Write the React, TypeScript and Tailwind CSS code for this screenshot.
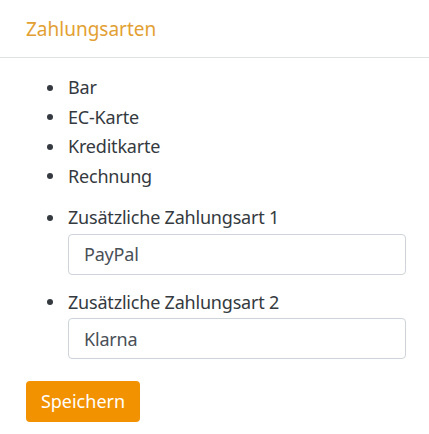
import React from "react";

function Item({ children, className = "" }: { children: React.ReactNode; className?: string }) {
  return (
    <li className={`grid grid-cols-[21px_1fr] ${className}`}>
      <span className="h-[29.5px] flex items-center">
        <span className="block w-[6px] h-[6px] rounded-full bg-[#343a40]" />
      </span>
      <div>{children}</div>
    </li>
  );
}

export default function App() {
  const items = ["Bar", "EC-Karte", "Kreditkarte", "Rechnung"];
  return (
    <div className="w-[429px] h-[434px] bg-white font-['Noto_Sans',sans-serif] text-[#343a40]">
      <div className="h-[58px] pl-[26px] pt-[1px] flex items-center border-b border-[#dee2e6] text-[19px] text-[#e3a032]">
        Zahlungsarten
      </div>
      <ul className="list-none pl-[47px] pr-[23px] pt-[15px] text-[18px] tracking-[-0.2px] leading-[29.5px]">
        {items.map((t) => (
          <Item key={t}>{t}</Item>
        ))}
        <Item className="mt-[12px]">
          Zusätzliche Zahlungsart 1
          <input
            readOnly
            value="PayPal"
            className="mt-[1px] block w-[338px] h-[41px] rounded-[4px] border border-[#ced4da] pl-[15px] text-[18px] text-[#495057] outline-none"
          />
        </Item>
        <Item className="mt-[13px]">
          Zusätzliche Zahlungsart 2
          <input
            readOnly
            value="Klarna"
            className="mt-[1px] block w-[338px] h-[41px] rounded-[4px] border border-[#ced4da] pl-[15px] text-[18px] text-[#495057] outline-none"
          />
        </Item>
      </ul>
      <div className="pl-[26px] pt-[22px]">
        <button className="h-[41px] w-[114px] rounded-[4px] bg-[#f39200] text-white text-[18px] flex items-center justify-center">
          Speichern
        </button>
      </div>
    </div>
  );
}
